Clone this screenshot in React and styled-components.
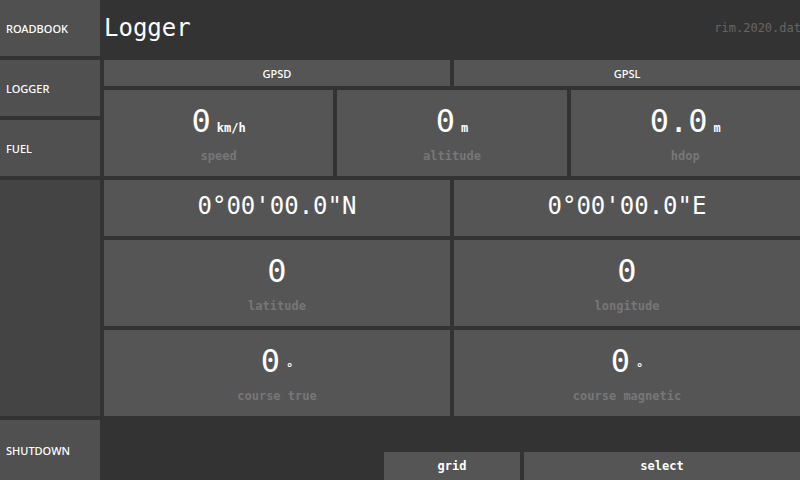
import React from "react";
import styled, { createGlobalStyle } from "styled-components";

const colors = {
  bg: "#333333",
  cell: "#555555",
  side: "#505050",
  sideEmpty: "#444444",
  label: "#777777",
  file: "#666666",
  text: "#ffffff",
};

const mono = `"DejaVu Sans Mono", "Liberation Mono", monospace`;
const sans = `"Noto Sans", "DejaVu Sans", sans-serif`;

const GlobalStyle = createGlobalStyle`
  html, body {
    margin: 0;
    padding: 0;
    background: ${colors.bg};
  }
  #root {
    width: 800px;
    height: 480px;
    overflow: hidden;
  }
`;

const sideItems = [
  { label: "ROADBOOK", height: 56 },
  { label: "LOGGER", height: 56 },
  { label: "FUEL", height: 56 },
  { label: "", height: 0, filler: true },
  { label: "SHUTDOWN", height: 60 },
];

export default function App() {
  return (
    <>
      <GlobalStyle />
      <Screen>
        <Sidebar>
          {sideItems.map((item, i) =>
            item.filler ? (
              <SideFiller key={i} />
            ) : (
              <SideButton key={i} $h={item.height}>
                {item.label}
              </SideButton>
            )
          )}
        </Sidebar>

        <Main>
          <Header>
            <Title>Logger</Title>
            <FileName>rim.2020.dat</FileName>
          </Header>

          <Row $cols={2} $h={26}>
            <TabCell>GPSD</TabCell>
            <TabCell>GPSL</TabCell>
          </Row>

          <Row $cols={3} $h={86}>
            <Metric value="0" unit="km/h" label="speed" />
            <Metric value="0" unit="m" label="altitude" />
            <Metric value="0.0" unit="m" label="hdop" />
          </Row>

          <Row $cols={2} $h={56}>
            <CoordCell>0°00'00.0"N</CoordCell>
            <CoordCell>0°00'00.0"E</CoordCell>
          </Row>

          <Row $cols={2} $h={86}>
            <Metric value="0" label="latitude" />
            <Metric value="0" label="longitude" />
          </Row>

          <Row $cols={2} $h={86}>
            <Metric value="0" unit="°" label="course true" />
            <Metric value="0" unit="°" label="course magnetic" />
          </Row>

          <BottomBar>
            <ActionButton $w={136}>grid</ActionButton>
            <ActionButton $w={276}>select</ActionButton>
          </BottomBar>
        </Main>
      </Screen>
    </>
  );
}

function Metric({ value, unit, label }) {
  return (
    <MetricCell>
      <ValueLine>
        <Value>{value}</Value>
        {unit && <Unit>{unit}</Unit>}
      </ValueLine>
      <MetricLabel>{label}</MetricLabel>
    </MetricCell>
  );
}

const Screen = styled.div`
  display: flex;
  width: 800px;
  height: 480px;
  background: ${colors.bg};
`;

const Sidebar = styled.div`
  display: flex;
  flex-direction: column;
  gap: 4px;
  width: 100px;
  flex-shrink: 0;
`;

const SideButton = styled.div`
  display: flex;
  align-items: center;
  height: ${(p) => p.$h}px;
  padding-left: 6px;
  background: ${colors.side};
  color: ${colors.text};
  font-family: ${sans};
  font-size: 11px;
  font-weight: 500;
`;

const SideFiller = styled.div`
  flex: 1;
  background: ${colors.sideEmpty};
`;

const Main = styled.div`
  flex: 1;
  display: flex;
  flex-direction: column;
  gap: 4px;
  margin-left: 4px;
  min-width: 0;
`;

const Header = styled.div`
  display: flex;
  align-items: center;
  justify-content: space-between;
  height: 56px;
`;

const Title = styled.h1`
  margin: 0;
  font-family: ${mono};
  font-weight: normal;
  font-size: 24px;
  color: ${colors.text};
`;

const FileName = styled.span`
  font-family: ${mono};
  font-size: 12px;
  color: ${colors.file};
  margin-right: -1px;
`;

const Row = styled.div`
  display: grid;
  grid-template-columns: repeat(${(p) => p.$cols}, 1fr);
  gap: 4px;
  height: ${(p) => p.$h}px;
`;

const TabCell = styled.div`
  display: flex;
  align-items: center;
  justify-content: center;
  background: ${colors.cell};
  color: ${colors.text};
  font-family: ${sans};
  font-size: 11px;
  font-weight: 500;
`;

const CoordCell = styled.div`
  display: flex;
  align-items: center;
  justify-content: center;
  padding-bottom: 4px;
  background: ${colors.cell};
  color: ${colors.text};
  font-family: ${mono};
  font-size: 24px;
`;

const MetricCell = styled.div`
  display: flex;
  flex-direction: column;
  align-items: center;
  padding-top: 13px;
  background: ${colors.cell};
`;

const ValueLine = styled.div`
  height: 36px;
  line-height: 36px;
  white-space: nowrap;
  color: ${colors.text};
  font-family: ${mono};
`;

const Value = styled.span`
  font-size: 32px;
`;

const Unit = styled.span`
  margin-left: 6px;
  font-size: 12px;
  line-height: 1;
  font-weight: bold;
`;

const MetricLabel = styled.div`
  margin-top: 9px;
  line-height: 16px;
  font-family: ${mono};
  font-size: 12px;
  font-weight: bold;
  color: ${colors.label};
`;

const BottomBar = styled.div`
  display: flex;
  justify-content: flex-end;
  align-items: flex-end;
  gap: 4px;
  height: 60px;
`;

const ActionButton = styled.div`
  display: flex;
  align-items: center;
  justify-content: center;
  width: ${(p) => p.$w}px;
  height: 28px;
  background: ${colors.cell};
  color: ${colors.text};
  font-family: ${mono};
  font-size: 12px;
  font-weight: bold;
`;
